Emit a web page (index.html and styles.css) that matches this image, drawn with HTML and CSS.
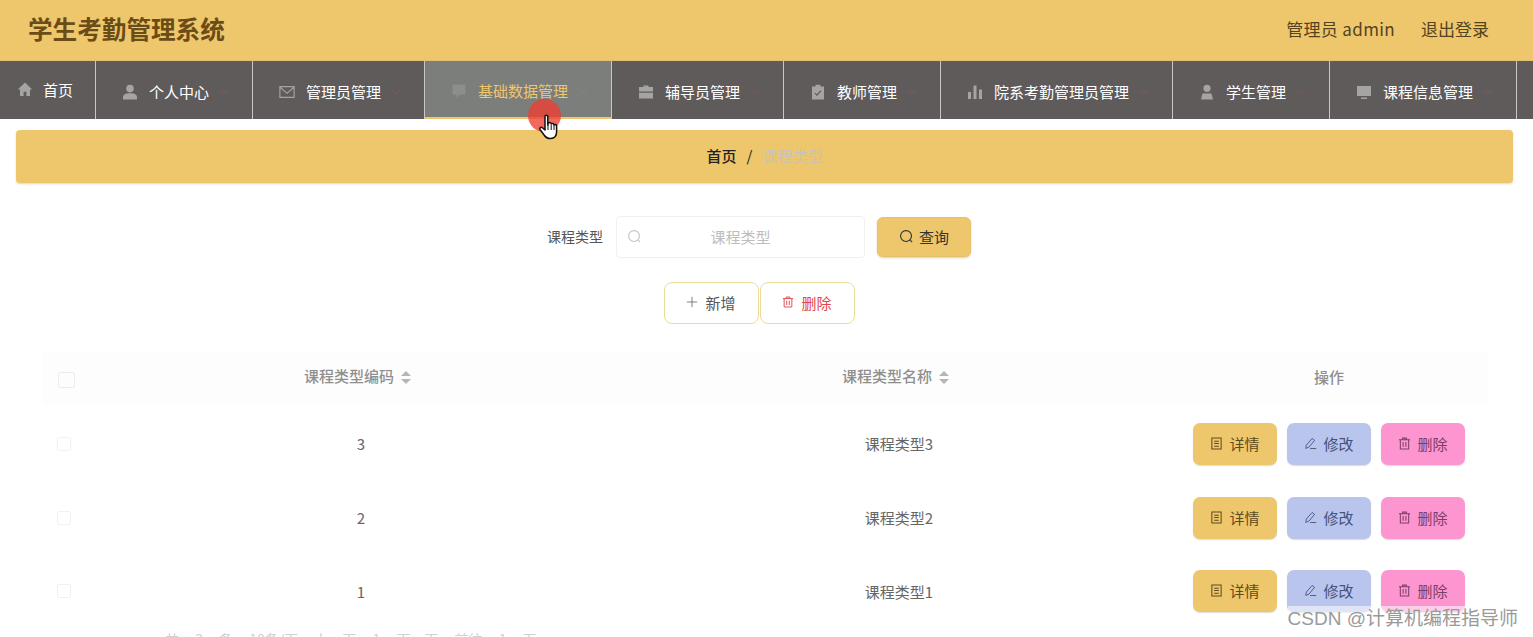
FILE: index.html
```html
<!DOCTYPE html>
<html lang="zh-CN">
<head>
    <meta charset="UTF-8">
    <meta name="viewport" content="width=device-width, initial-scale=1.0">
    <title>学生考勤管理系统</title>
    <link rel="stylesheet" href="styles.css">
</head>
<body>
    <svg class="defs" width="0" height="0">
        <symbol id="i-home" viewBox="0 0 16 16"><path d="M8 1.5 0.8 8.6h2.2V15h3.6v-4.2h2.800V15H13V8.600h2.200z"/></symbol>
        <symbol id="i-user" viewBox="0 0 16 16"><circle cx="8" cy="4.600" r="3.800"/><path d="M1 15.500v-2.200c0-2.600 2.600-4 7-4s7 1.400 7 4v2.200z"/></symbol>
        <symbol id="i-mail" viewBox="0 0 18 16"><path d="M1 2h16v12H1zM1.500 3l7.500 6.500L16.500 3" fill="none" stroke="currentColor" stroke-width="1.300"/></symbol>
        <symbol id="i-chat" viewBox="0 0 16 16"><path d="M1.500 1.500h13v10H9L5.500 15v-3.500h-4z"/></symbol>
        <symbol id="i-case" viewBox="0 0 16 16"><path d="M5.500 3V1.500h5V3H15v4.500H1V3zM1 8.700h14V14.500H1z"/></symbol>
        <symbol id="i-clip" viewBox="0 0 16 16"><path d="M5.500 0.800h5V2.500H14v13H2v-13h3.500zM4.500 9.500l2.500 2.500 4.500-5-1-0.800L7 10.200 5.400 8.700z" fill-rule="evenodd"/></symbol>
        <symbol id="i-bars" viewBox="0 0 16 16"><path d="M1 8h3v7H1zM6.500 1.500h3V15h-3zM12 5.500h3V15h-3z"/></symbol>
        <symbol id="i-person" viewBox="0 0 16 16"><circle cx="8" cy="4.300" r="3.600"/><path d="M2 15.500 3.500 9.500h9L14 15.500z"/></symbol>
        <symbol id="i-screen" viewBox="0 0 16 16"><path d="M1 2h14v10H1zM5 13.500h6V15H5z"/></symbol>
        <symbol id="i-caret" viewBox="0 0 10 6"><path d="M1 1l4 4 4-4" fill="none" stroke="currentColor" stroke-width="1.200"/></symbol>
        <symbol id="i-search" viewBox="0 0 16 16"><circle cx="7.500" cy="7.500" r="5.800" fill="none" stroke="currentColor" stroke-width="1.200"/><path d="M11.700 11.700l2.300 2.300" stroke="currentColor" stroke-width="1.200"/></symbol>
        <symbol id="i-plus" viewBox="0 0 14 14"><path d="M7 1v12M1 7h12" stroke="currentColor" stroke-width="1.100"/></symbol>
        <symbol id="i-trash" viewBox="0 0 14 14"><path d="M1 3h12M5 3V1.200h4V3M2.500 3v9.800h9V3M5.500 5.500v5M8.500 5.500v5" fill="none" stroke="currentColor" stroke-width="1.100"/></symbol>
        <symbol id="i-doc" viewBox="0 0 14 14"><path d="M2 1h10v12H2zM4.500 4.500h5M4.500 7h5M4.500 10h5" fill="none" stroke="currentColor" stroke-width="1.100"/></symbol>
        <symbol id="i-edit" viewBox="0 0 16 14"><path d="M10 0.800 13 3.200 6 11.500 2.200 13 2.800 9zM7.500 13.200h7.500" fill="none" stroke="currentColor" stroke-width="1.100"/></symbol>
    </svg>

    <header class="topbar">
        <div class="title">学生考勤管理系统</div>
        <div class="account">
            <span class="who">管理员 admin</span>
            <span>退出登录</span>
        </div>
    </header>

    <nav class="menu">
        <a class="menu-item home"><svg class="ico"><use href="#i-home"/></svg><span>首页</span></a>
        <a class="menu-item"><svg class="ico"><use href="#i-user"/></svg><span>个人中心</span><svg class="caret"><use href="#i-caret"/></svg></a>
        <a class="menu-item"><svg class="ico"><use href="#i-mail"/></svg><span>管理员管理</span><svg class="caret"><use href="#i-caret"/></svg></a>
        <a class="menu-item active"><svg class="ico"><use href="#i-chat"/></svg><span>基础数据管理</span><svg class="caret"><use href="#i-caret"/></svg></a>
        <a class="menu-item"><svg class="ico"><use href="#i-case"/></svg><span>辅导员管理</span><svg class="caret"><use href="#i-caret"/></svg></a>
        <a class="menu-item"><svg class="ico"><use href="#i-clip"/></svg><span>教师管理</span><svg class="caret"><use href="#i-caret"/></svg></a>
        <a class="menu-item"><svg class="ico"><use href="#i-bars"/></svg><span>院系考勤管理员管理</span><svg class="caret"><use href="#i-caret"/></svg></a>
        <a class="menu-item"><svg class="ico"><use href="#i-person"/></svg><span>学生管理</span><svg class="caret"><use href="#i-caret"/></svg></a>
        <a class="menu-item"><svg class="ico"><use href="#i-screen"/></svg><span>课程信息管理</span><svg class="caret"><use href="#i-caret"/></svg></a>
    </nav>

    <div class="crumbs">
        <b>首页</b><i>/</i><span>课程类型</span>
    </div>

    <main class="content">
        <form class="search">
            <label>课程类型</label>
            <div class="search-box">
                <svg class="search-ico"><use href="#i-search"/></svg>
                <span>课程类型</span>
            </div>
            <button type="button" class="btn-query"><svg><use href="#i-search"/></svg>查询</button>
        </form>

        <div class="actions">
            <button type="button" class="btn-line"><svg><use href="#i-plus"/></svg>新增</button>
            <button type="button" class="btn-line danger"><svg><use href="#i-trash"/></svg>删除</button>
        </div>

        <table class="grid">
            <colgroup>
                <col class="col-check">
                <col class="col-code">
                <col class="col-name">
                <col class="col-ops">
            </colgroup>
            <thead>
                <tr>
                    <th><span class="check head-check"></span></th>
                    <th class="sortable">课程类型编码<span class="sort"></span></th>
                    <th class="sortable">课程类型名称<span class="sort"></span></th>
                    <th class="ops-head">操作</th>
                </tr>
            </thead>
            <tbody>
                <tr>
                    <td><span class="check"></span></td>
                    <td>3</td>
                    <td>课程类型3</td>
                    <td>
                        <div class="ops">
                            <button type="button" class="op op-view"><svg><use href="#i-doc"/></svg>详情</button>
                            <button type="button" class="op op-edit"><svg><use href="#i-edit"/></svg>修改</button>
                            <button type="button" class="op op-del"><svg><use href="#i-trash"/></svg>删除</button>
                        </div>
                    </td>
                </tr>
                <tr>
                    <td><span class="check"></span></td>
                    <td>2</td>
                    <td>课程类型2</td>
                    <td>
                        <div class="ops">
                            <button type="button" class="op op-view"><svg><use href="#i-doc"/></svg>详情</button>
                            <button type="button" class="op op-edit"><svg><use href="#i-edit"/></svg>修改</button>
                            <button type="button" class="op op-del"><svg><use href="#i-trash"/></svg>删除</button>
                        </div>
                    </td>
                </tr>
                <tr>
                    <td><span class="check"></span></td>
                    <td>1</td>
                    <td>课程类型1</td>
                    <td>
                        <div class="ops">
                            <button type="button" class="op op-view"><svg><use href="#i-doc"/></svg>详情</button>
                            <button type="button" class="op op-edit"><svg><use href="#i-edit"/></svg>修改</button>
                            <button type="button" class="op op-del"><svg><use href="#i-trash"/></svg>删除</button>
                        </div>
                    </td>
                </tr>
            </tbody>
        </table>

        <div class="pager">共 3 条 10条/页 上一页 1 下一页 前往 1 页</div>
    </main>

    <!-- click marker and pointer -->
    <div class="click-dot"></div>
    <svg class="pointer" viewBox="0 0 22 28">
        <path d="M7 2.500c0-1.800 2.800-1.800 2.800 0V11l0.600-2c1.400-0.800 2.600-0.400 2.800 0.800 1.200-0.800 2.600-0.400 2.800 1 1.400-0.600 2.600 0 2.600 1.400v5.300c0 4-2 7-6 7-3.200 0-5-1-6.500-3.500L2 15.500c-1-1.600 1-3 2.400-1.800L7 16z" fill="#fff" stroke="#111" stroke-width="1.500" stroke-linejoin="round"/>
        <path d="M10 11v5M13.200 10.500v5.500M16 11v5" stroke="#111" stroke-width="1"/>
    </svg>

    <div class="watermark">CSDN @计算机编程指导师</div>
</body>
</html>
```

FILE: styles.css
```css
* {
    box-sizing: border-box;
}

html, body {
    height: 100%;
}

body {
    margin: 0;
    background: #fff;
    color: #555;
    font-family: "Noto Sans CJK SC", "Noto Sans", sans-serif;
    font-size: 14px;
    overflow: hidden;
    position: relative;
}

.defs {
    position: absolute;
}

/* top bar */
.topbar {
    height: 61px;
    background: #eec76c;
    display: flex;
    align-items: center;
    justify-content: space-between;
    padding: 0 44px 4px 28px;
    border-bottom: 1px solid #e3c070;
}

.title {
    font-size: 24.6px;
    font-weight: 700;
    color: #6b4c17;
    line-height: 1;
}

.account {
    display: flex;
    gap: 26px;
    font-size: 17px;
    color: #54431f;
}

.who {
    letter-spacing: .35px;
}

/* main menu */
.menu {
    height: 58px;
    background: #5f5b5b;
    display: flex;
    overflow: hidden;
}

.menu-item {
    flex: none;
    display: flex;
    align-items: center;
    height: 100%;
    padding: 3px 23px 0 26px;
    border-right: 1px solid #c9c7c5;
    color: #fff;
    font-size: 15px;
    white-space: nowrap;
}

.home {
    padding: 0 21px 2px 17px;
    width: 96px;
}

.ico {
    width: 16px;
    height: 16px;
    margin-right: 11px;
    fill: #a6a4a2;
    color: #a6a4a2;
    flex: none;
}

.home .ico {
    margin-right: 10px;
}

.caret {
    width: 10px;
    height: 6px;
    margin-left: 10px;
    color: #77585e;
    flex: none;
}

.menu-item.active {
    background: #7b7e7b;
    color: #eec76c;
    border-bottom: 2px solid #eec76c;
}

.menu-item.active .ico {
    fill: #8b8e8b;
}

.menu-item.active .caret {
    color: #838378;
}

/* breadcrumb strip */
.crumbs {
    height: 53px;
    margin: 11px 20px 0 16px;
    background: #eec76c;
    border-radius: 4px;
    box-shadow: 0 1px 2px rgba(170, 140, 70, .35);
    display: flex;
    align-items: center;
    justify-content: center;
    font-size: 15px;
    color: #222;
    padding-bottom: 2px;
}

.crumbs b {
    font-weight: 500;
}

.crumbs i {
    font-style: normal;
    margin: 0 10px;
}

.crumbs span {
    color: #c9c3b5;
}

/* search and actions */
.content {
    padding: 33px 45px 0 43px;
}

.search {
    display: flex;
    align-items: center;
    justify-content: center;
    height: 42px;
    padding-right: 13px;
}

.search label {
    color: #555;
    margin: 0 13px 2px 0;
}

.search-box {
    width: 249px;
    height: 42px;
    border: 1px solid #f0f0ee;
    border-radius: 4px;
    display: flex;
    align-items: center;
    position: relative;
    justify-content: center;
    color: #bdbdbd;
    font-size: 15px;
    padding-bottom: 2px;
}

.search-ico {
    position: absolute;
    left: 10px;
    top: 12px;
    width: 15px;
    height: 15px;
    color: #c4c4c4;
}

.btn-query {
    width: 94px;
    height: 40px;
    margin-left: 12px;
    border: 1px solid #e6c06a;
    border-radius: 6px;
    background: #eec76c;
    box-shadow: 0 1px 2px rgba(170, 140, 70, .4);
    color: #333;
    font: inherit;
    font-size: 15px;
    display: flex;
    align-items: center;
    justify-content: center;
    gap: 5px;
    padding-bottom: 3px;
}

.btn-query svg {
    width: 15px;
    height: 15px;
}

.actions {
    display: flex;
    justify-content: center;
    gap: 1px;
    margin-top: 24px;
    padding-right: 13px;
}

.btn-line {
    width: 95px;
    height: 42px;
    border: 1px solid #ecdc9c;
    border-radius: 8px;
    background: #fff;
    color: #555;
    font: inherit;
    font-size: 15px;
    display: flex;
    align-items: center;
    justify-content: center;
    gap: 7px;
    padding-bottom: 3px;
}

.btn-line svg {
    width: 12px;
    height: 12px;
    color: #777;
}

.btn-line.danger,
.btn-line.danger svg {
    color: #e0474c;
}

/* data table */
.grid {
    width: 1445px;
    margin-top: 27px;
    border-collapse: collapse;
    table-layout: fixed;
    text-align: center;
}

.col-check {
    width: 45px;
}

.col-code {
    width: 546px;
}

.col-name {
    width: 530px;
}

.col-ops {
    width: 324px;
}

.grid th {
    height: 54px;
    padding: 0;
    background: #fdfdfd;
    color: #8f8f8f;
    font-weight: 500;
    font-size: 15px;
}

.grid th.sortable {
    padding: 0 6px 5px 0;
}

.grid td {
    height: 73.5px;
    padding: 0;
    color: #666;
    font-size: 15px;
}

.grid tbody tr:first-child td {
    height: 76px;
    padding-top: 1px;
}

.grid th.ops-head {
    padding: 0 0 3px 6px;
}

.check {
    display: block;
    width: 14px;
    height: 14px;
    margin-left: 14px;
    border: 1px solid #f1f1f1;
    border-radius: 2px;
}

.head-check {
    width: 17px;
    height: 16px;
    border-color: #ececec;
    margin-top: 4px;
    margin-left: 15px;
}

.sort {
    display: inline-block;
    position: relative;
    width: 11px;
    height: 13px;
    margin-left: 7px;
    vertical-align: -2px;
}

.sort::before,
.sort::after {
    content: "";
    position: absolute;
    left: 0;
    border-left: 5.5px solid transparent;
    border-right: 5.5px solid transparent;
}

.sort::before {
    top: 0;
    border-bottom: 5.5px solid #b5b5b5;
}

.sort::after {
    bottom: 0;
    border-top: 5.5px solid #b5b5b5;
}

.ops {
    display: flex;
    align-items: center;
    justify-content: center;
    gap: 10px;
    padding-left: 6px;
}

.op {
    width: 84px;
    height: 42px;
    border: none;
    border-radius: 7px;
    font: inherit;
    font-size: 15px;
    display: flex;
    align-items: center;
    justify-content: center;
    gap: 6px;
    padding-bottom: 2px;
    box-shadow: 0 1px 1px rgba(120, 110, 90, .25);
}

.op svg {
    width: 13px;
    height: 13px;
    flex: none;
}

.op-view {
    background: #eec76c;
    color: #5e4a1e;
}

.op-edit {
    background: #b9c5ec;
    color: #47527a;
}

.op-del {
    background: #fd96d0;
    color: #7c3d66;
}

.pager {
    margin-top: 1px;
    padding-left: 122px;
    color: #d0d0d0;
    font-size: 14px;
    word-spacing: 13px;
}

/* things sitting on top of the page */
.click-dot {
    position: absolute;
    left: 528px;
    top: 99px;
    width: 33px;
    height: 33px;
    border-radius: 50%;
    background: rgba(240, 62, 50, .78);
}

.pointer {
    position: absolute;
    left: 538px;
    top: 114px;
    width: 22px;
    height: 28px;
}

.watermark {
    position: absolute;
    right: 15px;
    top: 606px;
    font-family: "Liberation Sans", "Noto Sans CJK SC", sans-serif;
    font-size: 19px;
    line-height: 26px;
    color: #9a9a9a;
    background: rgba(255, 255, 255, .55);
}
```
